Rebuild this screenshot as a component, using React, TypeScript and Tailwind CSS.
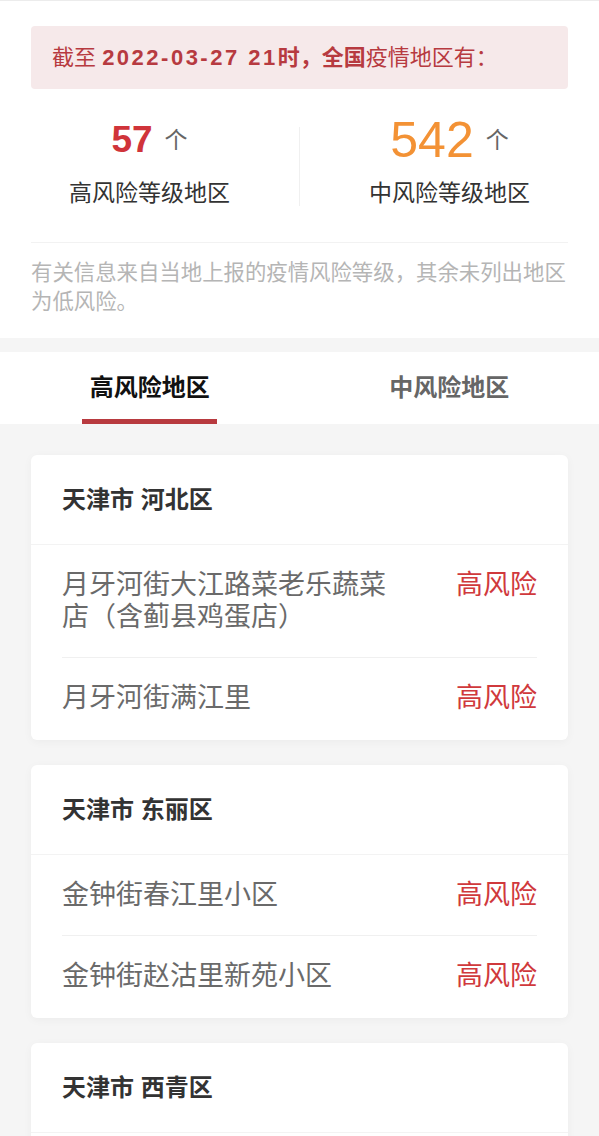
const FONT = "font-['Liberation_Sans','Noto_Sans_CJK_SC',sans-serif]";

interface Area {
  name: string;
  level: string;
}
interface Region {
  title: string;
  areas: Area[];
}

const regions: Region[] = [
  {
    title: '天津市 河北区',
    areas: [
      { name: '月牙河街大江路菜老乐蔬菜店（含蓟县鸡蛋店）', level: '高风险' },
      { name: '月牙河街满江里', level: '高风险' },
    ],
  },
  {
    title: '天津市 东丽区',
    areas: [
      { name: '金钟街春江里小区', level: '高风险' },
      { name: '金钟街赵沽里新苑小区', level: '高风险' },
    ],
  },
  {
    title: '天津市 西青区',
    areas: [{ name: '中北镇万科四季花城小区', level: '高风险' }],
  },
];

const RegionCard = ({ region }: { region: Region }) => (
  <div className="bg-white rounded-[6px] shadow-[0_2px_10px_rgba(0,0,0,0.04)] pb-[2px]">
    <div className="h-[90px] flex items-center px-[31px] border-b border-[#f3f3f3]">
      <span className="text-[24px] font-bold text-[#333]">{region.title}</span>
    </div>
    <div className="px-[31px]">
      {region.areas.map((area, i) => (
        <div
          key={area.name}
          className={`flex justify-between py-6 ${i < region.areas.length - 1 ? 'border-b border-[#f0f0f0]' : ''}`}
        >
          <div className="w-[336px] text-[27px] leading-[32px] text-[#6a6a6a]">{area.name}</div>
          <div className="text-[27px] leading-[32px] text-[#d0393c]">{area.level}</div>
        </div>
      ))}
    </div>
  </div>
);

export default function App() {
  return (
    <div className={`${FONT} w-[599px] h-[1136px] overflow-hidden bg-[#f5f5f5]`}>
      {/* Summary */}
      <div className="bg-white border-t border-[#ececec] pt-[25px] pb-[21px]">
        <div className="mx-[31px] h-[63px] rounded-[4px] bg-[#f6e9ea] px-[21px] flex items-center text-[22px] text-[#b73a40] whitespace-pre">
          <span>截至 </span>
          <span className="font-bold tracking-[2.5px]">2022-03-27 21</span>
          <span className="font-bold">时，全国</span>
          <span>疫情地区有：</span>
        </div>

        <div className="mt-[26px] grid grid-cols-[1fr_1px_1fr] items-center">
          <div className="flex flex-col items-center">
            <div className="h-[50px] flex items-center justify-center">
              <span className="text-[37px] font-bold text-[#d0343a] leading-[50px]">57</span>
              <span className="ml-[12px] text-[23px] text-[#666]">个</span>
            </div>
            <div className="mt-[13px] h-[30px] leading-[30px] text-[23px] text-[#333]">高风险等级地区</div>
          </div>
          <div className="h-[79px] bg-[#f0f0f0] mt-[10px]" />
          <div className="flex flex-col items-center">
            <div className="h-[50px] flex items-center justify-center">
              <span className="text-[50px] text-[#f39235] leading-[50px]">542</span>
              <span className="ml-[12px] text-[23px] text-[#666]">个</span>
            </div>
            <div className="mt-[13px] h-[30px] leading-[30px] text-[23px] text-[#333]">中风险等级地区</div>
          </div>
        </div>

        <div className="mx-[31px] mt-[34px] border-t border-[#f2f2f2] pt-[16px] text-[21.4px] leading-[29px] text-[#b5b5b5]">
          有关信息来自当地上报的疫情风险等级，其余未列出地区为低风险。
        </div>
      </div>

      {/* Tabs */}
      <div className="mt-[14px] bg-white h-[72px] grid grid-cols-2">
        <div className="flex flex-col items-center justify-end">
          <span className="text-[24px] font-bold text-[#111] leading-[30px] mb-[16px]">高风险地区</span>
          <div className="w-[135px] h-[5px] bg-[#b83a3f]" />
        </div>
        <div className="flex flex-col items-center justify-end">
          <span className="text-[24px] font-bold text-[#666] leading-[30px] mb-[21px]">中风险地区</span>
        </div>
      </div>

      {/* List */}
      <div className="px-[31px] pt-[31px] pb-[30px] flex flex-col gap-[25px]">
        {regions.map((r) => (
          <RegionCard key={r.title} region={r} />
        ))}
      </div>
    </div>
  );
}
